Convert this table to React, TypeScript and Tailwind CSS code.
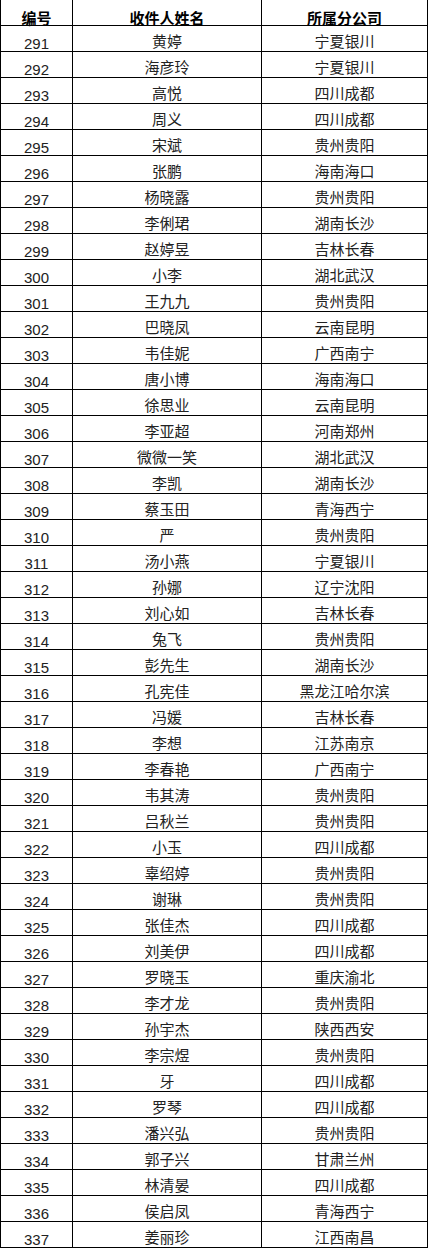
import React from 'react';

const rows: [string, string][] = [
  ['黄婷', '宁夏银川'],
  ['海彦玲', '宁夏银川'],
  ['高悦', '四川成都'],
  ['周义', '四川成都'],
  ['宋斌', '贵州贵阳'],
  ['张鹏', '海南海口'],
  ['杨晓露', '贵州贵阳'],
  ['李俐珺', '湖南长沙'],
  ['赵婷昱', '吉林长春'],
  ['小李', '湖北武汉'],
  ['王九九', '贵州贵阳'],
  ['巴晓凤', '云南昆明'],
  ['韦佳妮', '广西南宁'],
  ['唐小博', '海南海口'],
  ['徐思业', '云南昆明'],
  ['李亚超', '河南郑州'],
  ['微微一笑', '湖北武汉'],
  ['李凯', '湖南长沙'],
  ['蔡玉田', '青海西宁'],
  ['严', '贵州贵阳'],
  ['汤小燕', '宁夏银川'],
  ['孙娜', '辽宁沈阳'],
  ['刘心如', '吉林长春'],
  ['兔飞', '贵州贵阳'],
  ['彭先生', '湖南长沙'],
  ['孔宪佳', '黑龙江哈尔滨'],
  ['冯媛', '吉林长春'],
  ['李想', '江苏南京'],
  ['李春艳', '广西南宁'],
  ['韦其涛', '贵州贵阳'],
  ['吕秋兰', '贵州贵阳'],
  ['小玉', '四川成都'],
  ['辜绍婷', '贵州贵阳'],
  ['谢琳', '贵州贵阳'],
  ['张佳杰', '四川成都'],
  ['刘美伊', '四川成都'],
  ['罗晓玉', '重庆渝北'],
  ['李才龙', '贵州贵阳'],
  ['孙宇杰', '陕西西安'],
  ['李宗煜', '贵州贵阳'],
  ['牙', '四川成都'],
  ['罗琴', '四川成都'],
  ['潘兴弘', '贵州贵阳'],
  ['郭子兴', '甘肃兰州'],
  ['林清晏', '四川成都'],
  ['侯启凤', '青海西宁'],
  ['姜丽珍', '江西南昌'],
];

const cjk = "font-['SimSun','Noto_Sans_CJK_SC',sans-serif]";

export default function App() {
  return (
    <div className="w-[428px] bg-white text-black">
      <div className="border-l border-black">
        <div className="flex h-[26px] border-b border-black">
          <div className={`w-[72px] border-r border-black flex items-end justify-center text-[15px] leading-none font-bold ${cjk}`}>
            编号
          </div>
          <div className={`w-[189px] border-r border-black flex items-end justify-center text-[15px] leading-none font-bold ${cjk}`}>
            收件人姓名
          </div>
          <div className={`w-[166px] border-r border-black flex items-end justify-center text-[15px] leading-none font-bold ${cjk}`}>
            所属分公司
          </div>
        </div>
        {rows.map(([name, branch], i) => (
          <div key={i} className="flex h-[26px] border-b border-black">
            <div className="w-[72px] border-r border-black flex items-end justify-center text-[15px] leading-none font-['Liberation_Sans',sans-serif] text-[#222]">
              {291 + i}
            </div>
            <div className={`w-[189px] border-r border-black flex items-end justify-center pb-[3px] text-[15px] leading-none text-[#222] ${cjk}`}>
              {name}
            </div>
            <div className={`w-[166px] border-r border-black flex items-end justify-center pb-[3px] text-[15px] leading-none text-[#222] ${cjk}`}>
              {branch}
            </div>
          </div>
        ))}
      </div>
    </div>
  );
}
